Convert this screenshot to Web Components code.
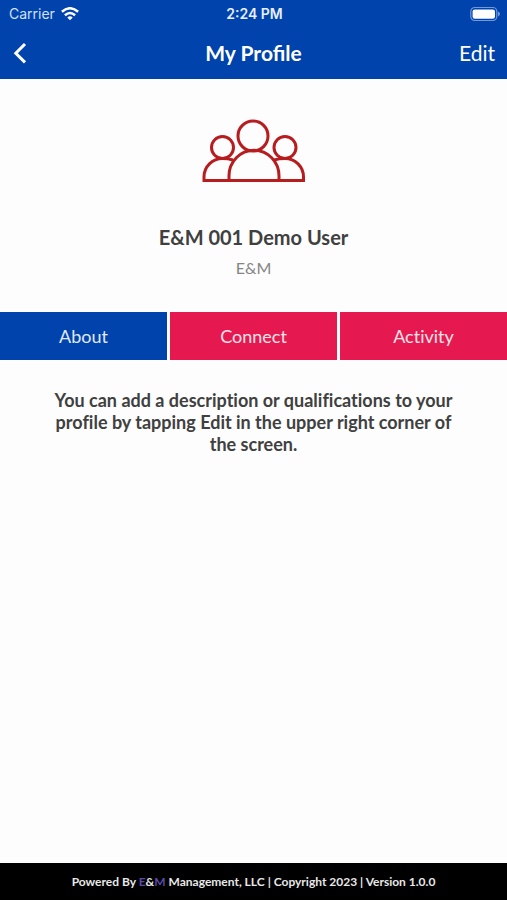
<!DOCTYPE html>
<html lang="en">
<head>
<meta charset="utf-8">
<meta name="viewport" content="width=device-width, initial-scale=1">
<title>My Profile</title>
<style>
body { margin: 0; background: #fdfdfd; color: #404040; font-family: Lato, "Liberation Sans", sans-serif; }
</style>
</head>
<body>
<profile-screen></profile-screen>
<script>
const define = (name, html, setup) => customElements.define(name, class extends HTMLElement {
  constructor() {
    super();
    this.attachShadow({ mode: "open" }).innerHTML = html;
    if (setup) setup(this);
  }
});

define("status-bar", `
<style>
:host { display: grid; grid-template-columns: 1fr auto 1fr; align-items: center; height: 27px; padding: 0 7px 0 9px; font: 14px/26px Inter, "Liberation Sans", sans-serif; color: #d3e0f6; }
.carrier { display: flex; align-items: center; gap: 6px; }
.time { font-weight: 600; color: #e8effb; }
.battery { justify-self: end; }
svg { display: block; }
</style>
<span class="carrier"><span>Carrier</span>
<svg width="18" height="14" viewBox="0 0 18 14" fill="none" stroke="#fff" stroke-width="2.5" aria-label="Wi-Fi"><path d="M.9 4.8Q9-2.3 17.1 4.8M3.9 8.2Q9 3.7 14.1 8.2"/><path d="M6.3 10.4Q9 8.2 11.7 10.4L9 13.3Z" fill="#fff" stroke="none"/></svg></span>
<span class="time">2:24 PM</span>
<svg class="battery" width="30" height="16" viewBox="0 0 30 16" aria-label="Battery full"><rect x=".8" y="1.5" width="26" height="13" rx="4" fill="none" stroke="#7299dc" stroke-width="1.2"/><rect x="2.6" y="3.4" width="22.4" height="9.4" rx="2.2" fill="#fff"/><path d="M28 5.6Q30 6.5 30 8T28 10.4Z" fill="#7299dc"/></svg>`);

define("nav-bar", `
<style>
:host { display: grid; grid-template-columns: 1fr auto 1fr; align-items: center; height: 52px; padding: 0 12px; color: #fff; }
h1 { margin: 0; font-size: 21px; line-height: 28px; font-weight: 700; }
button { border: 0; padding: 0; background: none; color: inherit; font: 21px/28px Lato, sans-serif; cursor: pointer; }
.back { justify-self: start; }
.edit { justify-self: end; }
svg { display: block; }
</style>
<button class="back" aria-label="Back"><svg width="16" height="22" viewBox="0 0 16 22" fill="none" stroke="#fff" stroke-width="3"><path d="M13 2L3.8 11.2L13 20.4"/></svg></button>
<h1><slot></slot></h1>
<button class="edit">Edit</button>`);

define("profile-summary", `
<style>
:host { display: flex; flex-direction: column; align-items: center; padding: 40px 16px 32px; text-align: center; }
svg { display: block; margin-bottom: 40px; }
h2 { margin: 0 0 5px; font-size: 20px; line-height: 28px; font-weight: 700; }
p { margin: 0; font-size: 16px; line-height: 24px; color: #858585; }
</style>
<svg width="104" height="64" viewBox="0 0 104 64" fill="none" stroke="#b71c1f" stroke-width="3" aria-hidden="true">
<circle cx="51" cy="17" r="15"/><circle cx="20.5" cy="28.5" r="11"/><circle cx="83" cy="28.5" r="11"/>
<path d="M27 61.5V57A24.8 25.5 0 0 1 77 57V61.5"/>
<path d="M31 41Q26 39.5 20.5 39.5A18.5 18.5 0 0 0 2 58V61.5H101.5V58A18.5 18.5 0 0 0 83 39.5Q77 39.5 72 41"/>
</svg>
<h2><slot name="name"></slot></h2>
<p><slot name="company"></slot></p>`);

define("tab-button", `
<style>
:host { display: block; }
button { display: block; width: 100%; height: 48px; border: 0; padding: 0; background: #e5194f; color: #fbe3ea; font: 18px/48px Lato, sans-serif; font-variant-ligatures: none; cursor: pointer; }
button[aria-pressed="true"] { background: #0043ad; color: #e0eaf8; }
</style>
<button aria-pressed="false"><slot></slot></button>`);
define("tab-strip", `
<style>
:host { display: grid; grid-template-columns: repeat(3, 1fr); gap: 3px; }
</style>
<tab-button>About</tab-button><tab-button>Connect</tab-button><tab-button>Activity</tab-button>`, host => {
  const tabs = [...host.shadowRoot.querySelectorAll("tab-button")];
  const select = tab => tabs.forEach(t => t.shadowRoot.querySelector("button").setAttribute("aria-pressed", String(t === tab)));
  tabs.forEach(tab => tab.addEventListener("click", () => select(tab)));
  select(tabs[0]);
});

define("profile-note", `
<style>
:host { display: block; padding: 29px 48px; font-size: 18px; line-height: 22px; font-weight: 700; font-variant-ligatures: none; text-align: center; }
p { margin: 0; }
</style>
<p><slot></slot></p>`);

define("app-footer", `
<style>
:host { display: block; padding: 8px; background: #000; color: #e8e8e8; font-size: 12px; line-height: 21px; font-weight: 700; text-align: center; }
b { font-weight: inherit; color: #5a4aa8; }
</style>
Powered By <b>E</b>&amp;<b>M</b> Management, LLC | Copyright 2023 | Version 1.0.0`);

define("profile-screen", `
<style>
:host { display: flex; flex-direction: column; min-height: 100vh; }
header { background: #0043ad; }
main { flex: 1; }
</style>
<header><status-bar></status-bar><nav-bar>My Profile</nav-bar></header>
<main>
<profile-summary><span slot="name">E&amp;M 001 Demo User</span><span slot="company">E&amp;M</span></profile-summary>
<tab-strip></tab-strip>
<profile-note>You can add a description or qualifications to your profile by tapping Edit in the upper right corner of the screen.</profile-note>
</main>
<app-footer></app-footer>`);
</script>
</body>
</html>
